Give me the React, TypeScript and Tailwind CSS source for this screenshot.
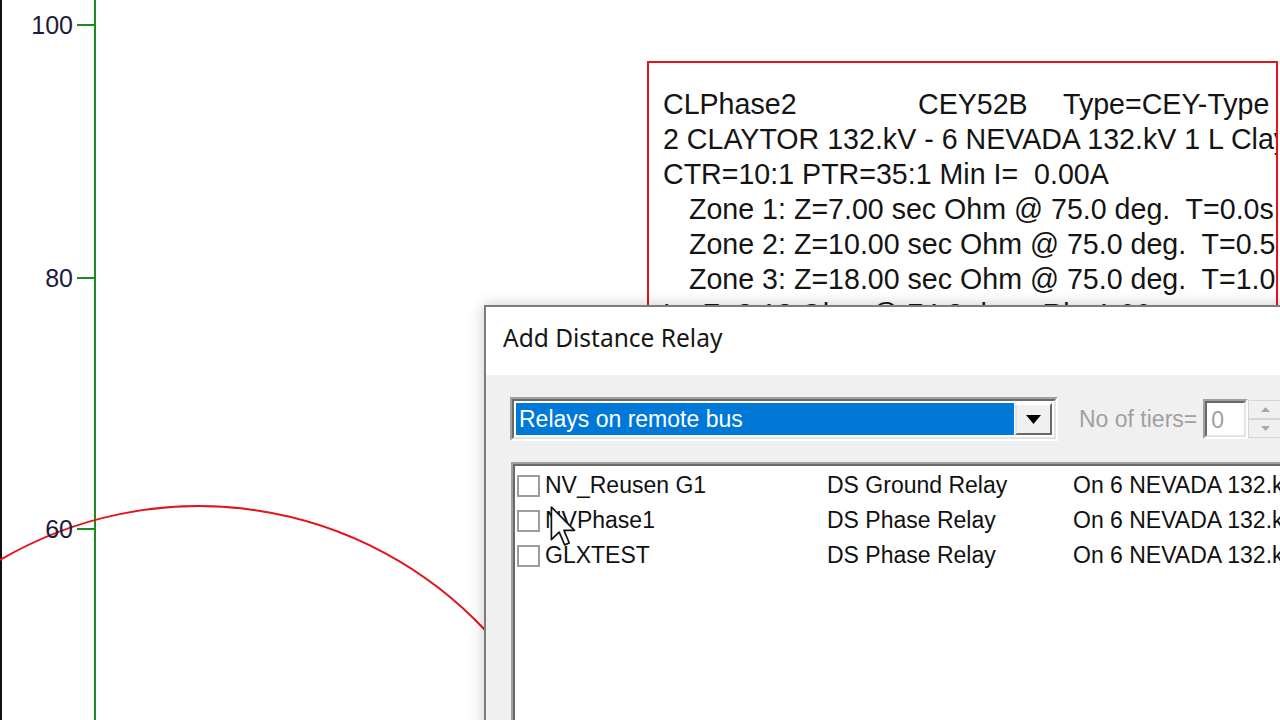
const HEADER = ["CLPhase2", "CEY52B", "Type=CEY-Type 1"];

const INFO_LINES = [
  "2 CLAYTOR 132.kV - 6 NEVADA 132.kV 1 L Claytor",
  "CTR=10:1 PTR=35:1 Min I=  0.00A",
];

const ZONES = [
  "Zone 1: Z=7.00 sec Ohm @ 75.0 deg.  T=0.0s",
  "Zone 2: Z=10.00 sec Ohm @ 75.0 deg.  T=0.5s",
  "Zone 3: Z=18.00 sec Ohm @ 75.0 deg.  T=1.0s",
];

const RELAYS = [
  { name: "NV_Reusen G1", kind: "DS Ground Relay", bus: "On 6 NEVADA 132.kV" },
  { name: "NVPhase1", kind: "DS Phase Relay", bus: "On 6 NEVADA 132.kV" },
  { name: "GLXTEST", kind: "DS Phase Relay", bus: "On 6 NEVADA 132.kV" },
];

const TICKS = [
  { label: "100", y: 25 },
  { label: "80", y: 278 },
  { label: "60", y: 529 },
];

function Plot() {
  return (
    <>
      <svg className="absolute inset-0" width={1280} height={720}>
        <rect x={0} y={0} width={2} height={720} fill="#111" />
        <rect x={94} y={0} width={2} height={720} fill="#1f8a22" />
        {TICKS.map((t) => (
          <rect key={t.label} x={77} y={t.y - 1} width={18} height={2} fill="#1f8a22" />
        ))}
        <path d="M0,560 A393,393 0 0 1 486,631" fill="none" stroke="#e3141c" strokeWidth={2} />
      </svg>
      {TICKS.map((t) => (
        <div
          key={t.label}
          className="absolute left-0 w-[73px] text-right text-[25px] leading-[28px] text-[#1c1c3a]"
          style={{ top: t.y - 14 }}
        >
          {t.label}
        </div>
      ))}
    </>
  );
}

function InfoBox() {
  return (
    <div className="absolute left-[647px] top-[61px] w-[631px] h-[320px] border-2 border-[#e3141c] overflow-hidden">
      <div className="pt-[24px] pl-[14px] text-[28.6px] leading-[35px] text-[#141414] whitespace-nowrap">
        <div className="flex">
          <span className="w-[255px] shrink-0">{HEADER[0]}</span>
          <span className="w-[145px] shrink-0">{HEADER[1]}</span>
          <span className="shrink-0">{HEADER[2]}</span>
        </div>
        {INFO_LINES.map((l) => (
          <div key={l} className="whitespace-pre">{l}</div>
        ))}
        {ZONES.map((z) => (
          <div key={z} className="pl-[26px] whitespace-pre">{z}</div>
        ))}
        <div className="whitespace-pre">Ln Z=8.12 Ohm @ 74.3 deg.  Rb=1.00</div>
      </div>
    </div>
  );
}

function Sunken({ className, children }: { className: string; children?: React.ReactNode }) {
  return (
    <div className={`border-2 border-t-[#a0a0a0] border-l-[#a0a0a0] border-r-white border-b-white ${className}`}>
      <div className="w-full h-full border-2 border-t-[#696969] border-l-[#696969] border-r-[#e3e3e3] border-b-[#e3e3e3] bg-white">
        {children}
      </div>
    </div>
  );
}

function Checkbox() {
  return <div className="w-[23px] h-[22px] border-2 border-[#9c9c9c] bg-white shrink-0" />;
}

function Cursor() {
  return (
    <svg className="absolute left-[550px] top-[506px]" width={28} height={42} viewBox="0 0 13 20">
      <path d="M0.5,0.5 L0.5,16 L4.2,12.4 L6.8,18.5 L9,17.6 L6.5,11.6 L11.5,11.6 Z" fill="#fff" stroke="#111" strokeWidth={0.8} strokeLinejoin="round" />
    </svg>
  );
}

function AddRelayDialog() {
  return (
    <div className="absolute left-[484px] top-[305px] w-[840px] h-[440px] border-2 border-[#7d7d7d] bg-[#f0f0f0] shadow-[0_0_14px_rgba(0,0,0,0.22)] font-['Liberation_Sans',Arial,sans-serif]">
      <div className="h-[68px] bg-white flex items-center pl-[17px] pb-[5px]">
        <span className="text-[24.5px] text-[#161616] font-['Noto_Sans',sans-serif]">Add Distance Relay</span>
      </div>

      <div className="pt-[22px] pl-[24px]">
        <div className="flex items-center">
          <Sunken className="w-[548px] h-[44px] shrink-0">
            <div className="flex h-full p-[2px]">
              <div className="flex-1 bg-[#0078d7] text-white text-[23px] leading-[33px] pl-[3px]">Relays on remote bus</div>
              <div className="w-[37px] ml-px border-2 border-t-white border-l-[#e3e3e3] border-r-[#696969] border-b-[#696969] bg-[#f0f0f0] flex items-center justify-center">
                <svg width={15} height={9} viewBox="0 0 15 9">
                  <path d="M0,0 L15,0 L7.5,9 Z" fill="#000" />
                </svg>
              </div>
            </div>
          </Sunken>
          <span className="ml-[21px] text-[23px] text-[#a0a0a0] shrink-0">No of tiers=</span>
          <Sunken className="ml-[6px] w-[45px] h-[40px] shrink-0">
            <span className="pl-[4px] text-[23px] leading-[34px] text-[#a0a0a0]">0</span>
          </Sunken>
          <div className="w-[34px] h-[38px] flex flex-col shrink-0">
            <div className="flex-1 border border-[#d6d6d6] flex items-center justify-center">
              <svg width={9} height={5}><path d="M0,5 L9,5 L4.5,0 Z" fill="#a8a8a8" /></svg>
            </div>
            <div className="flex-1 border border-[#d6d6d6] flex items-center justify-center">
              <svg width={9} height={5}><path d="M0,0 L9,0 L4.5,5 Z" fill="#a8a8a8" /></svg>
            </div>
          </div>
        </div>

        <Sunken className="mt-[21px] ml-px w-[800px] h-[300px]">
          <div className="pt-[2px] pl-[2px]">
            {RELAYS.map((r) => (
              <div key={r.name} className="flex items-center h-[35px] text-[23px] text-[#111] whitespace-nowrap">
                <Checkbox />
                <span className="ml-[5px] w-[282px] shrink-0">{r.name}</span>
                <span className="w-[246px] shrink-0">{r.kind}</span>
                <span className="shrink-0">{r.bus}</span>
              </div>
            ))}
          </div>
        </Sunken>
      </div>
    </div>
  );
}

export default function App() {
  return (
    <div className="relative w-[1280px] h-[720px] overflow-hidden bg-white font-['Liberation_Sans',Arial,sans-serif]">
      <Plot />
      <InfoBox />
      <AddRelayDialog />
      <Cursor />
    </div>
  );
}
